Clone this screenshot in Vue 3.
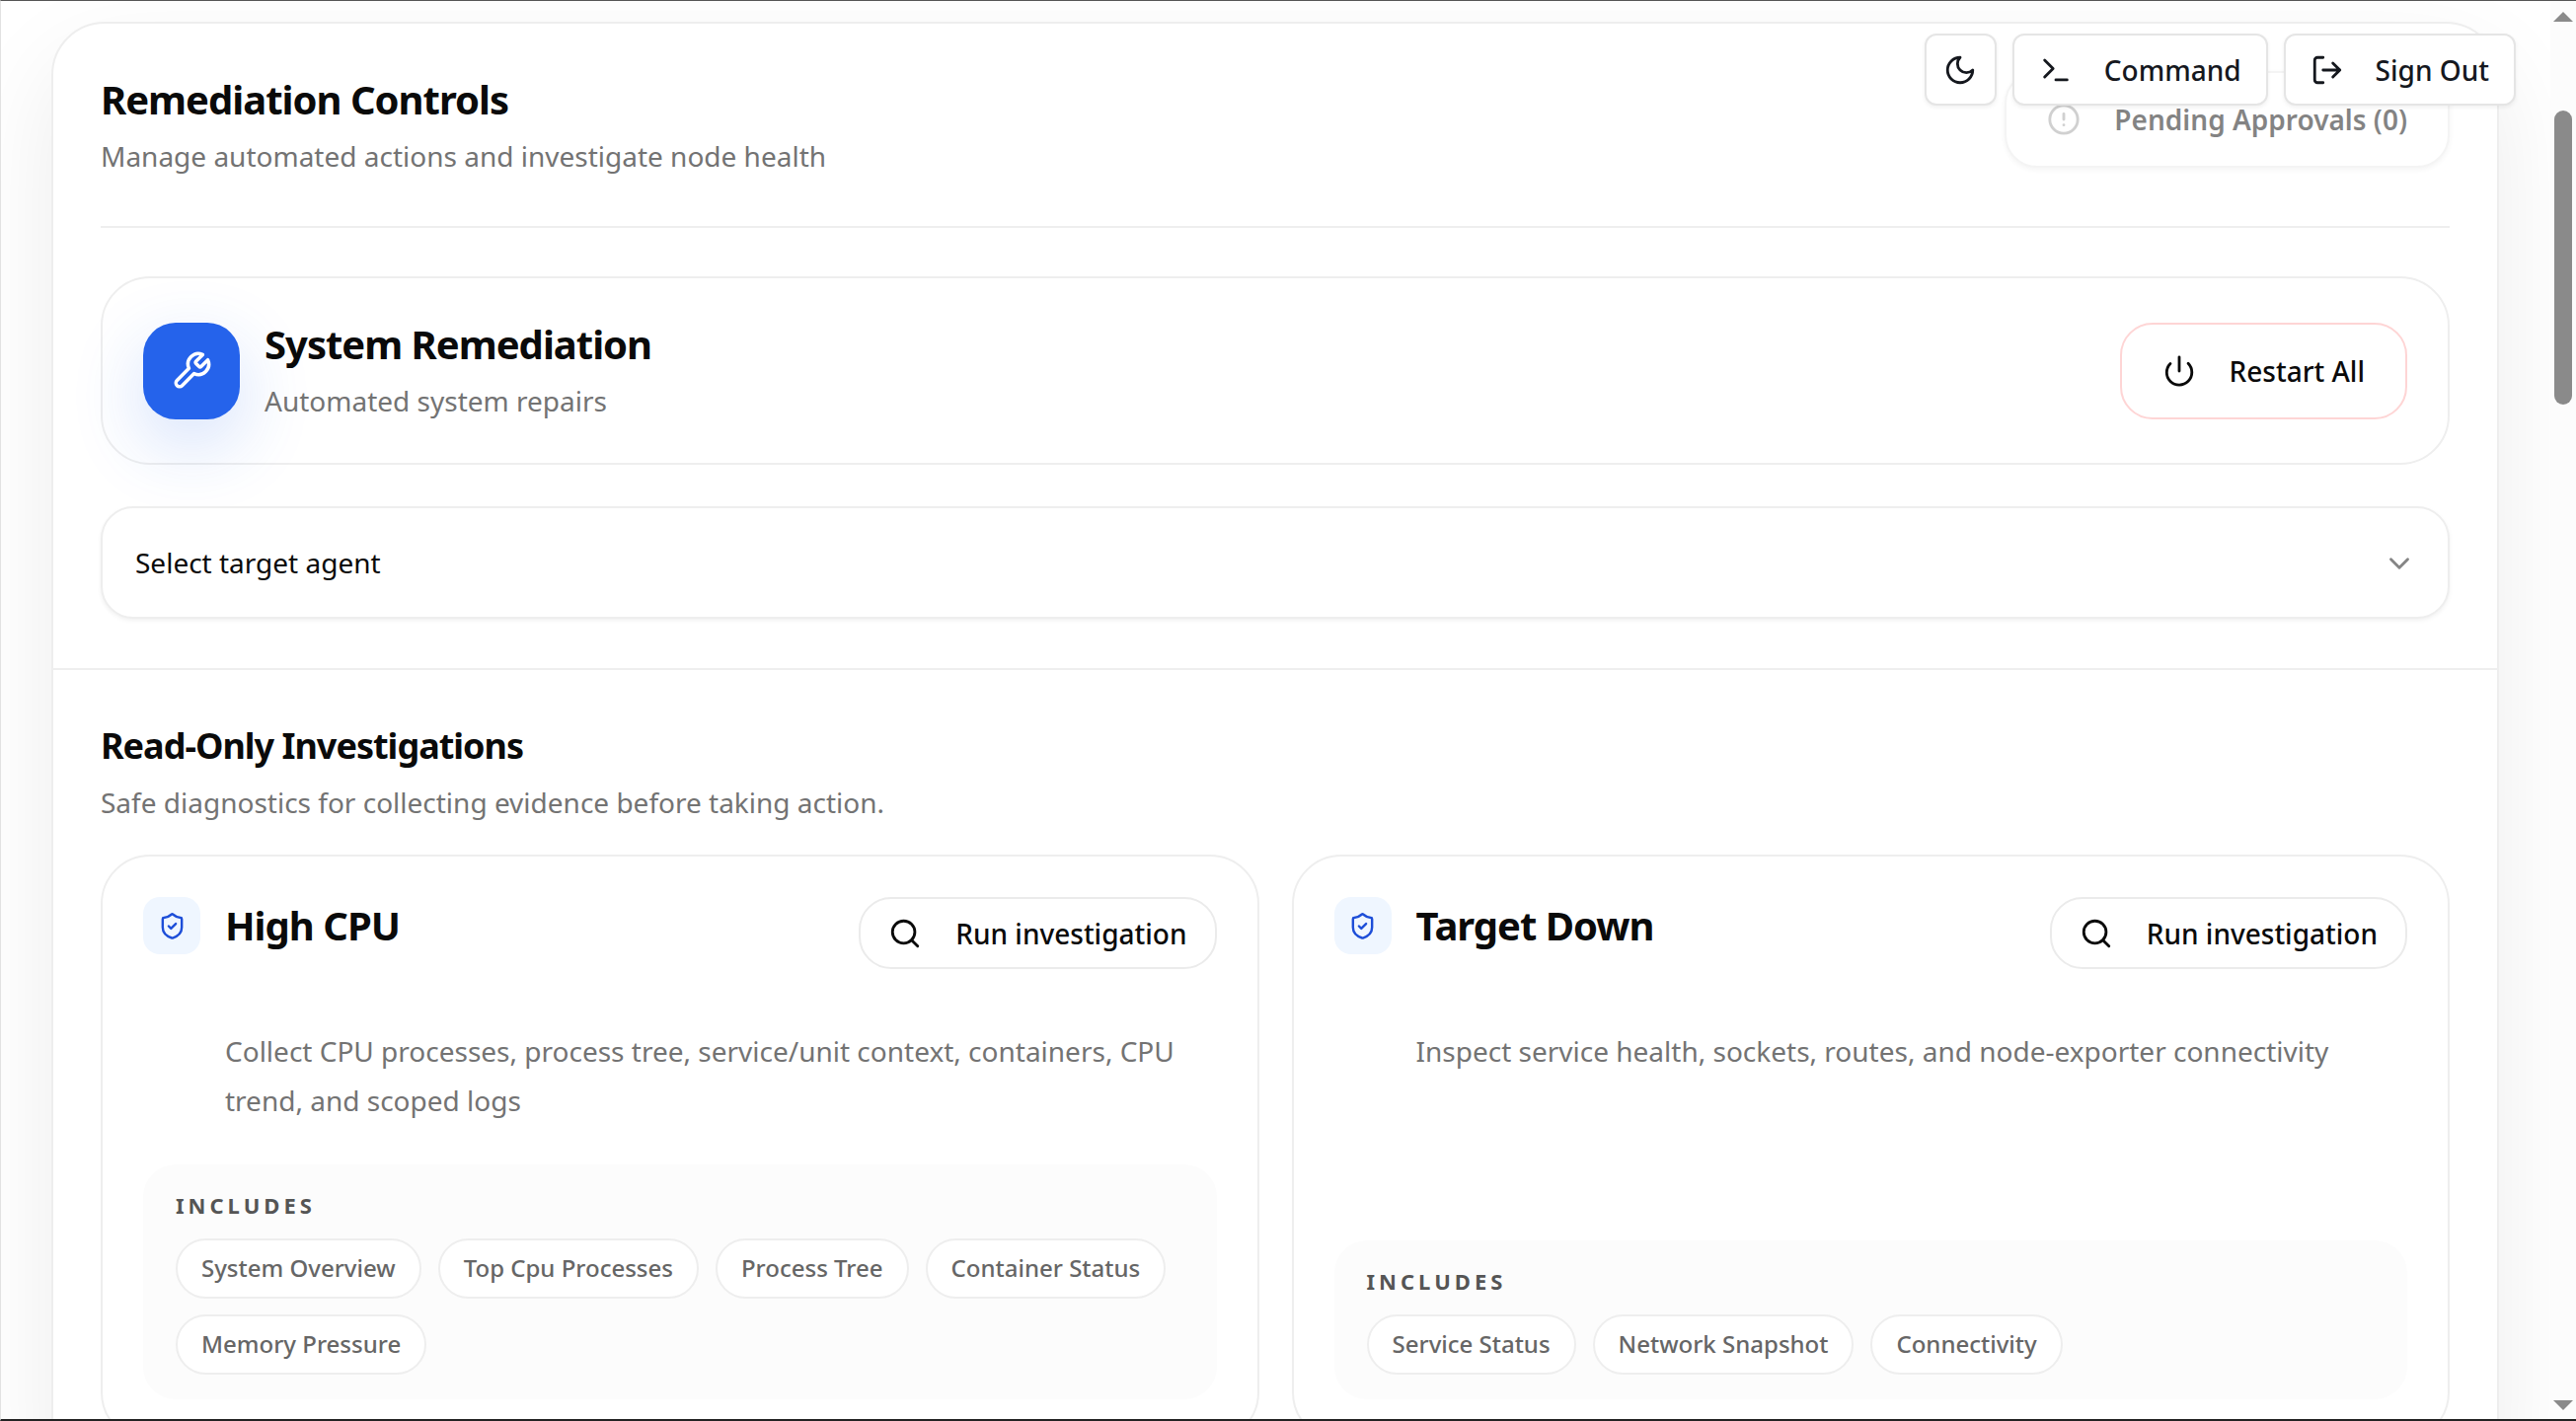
<script setup>
const investigations = [
  {
    title: 'High CPU',
    description: 'Collect CPU processes, process tree, service/unit context, containers, CPU trend, and scoped logs',
    includes: ['System Overview', 'Top Cpu Processes', 'Process Tree', 'Container Status', 'Memory Pressure'],
  },
  {
    title: 'Target Down',
    description: 'Inspect service health, sockets, routes, and node-exporter connectivity',
    includes: ['Service Status', 'Network Snapshot', 'Connectivity'],
  },
]
</script>

<template>
  <div class="viewport">
    <main class="panel">
      <section class="controls">
        <header class="controls-head">
          <div>
            <h1 class="title">Remediation Controls</h1>
            <p class="muted subtitle">Manage automated actions and investigate node health</p>
          </div>
          <button class="btn btn-large pending" type="button" disabled>
            <svg class="icon" viewBox="0 0 24 24"><circle cx="12" cy="12" r="10" /><path d="M12 8v4M12 16h.01" /></svg>
            <span>Pending Approvals (0)</span>
          </button>
        </header>

        <div class="system">
          <div class="system-badge">
            <svg class="icon icon-wrench" viewBox="0 0 24 24"><path d="M14.7 6.3a1 1 0 0 0 0 1.4l1.6 1.6a1 1 0 0 0 1.4 0l3.77-3.77a6 6 0 0 1-7.94 7.94l-6.91 6.91a2.12 2.12 0 0 1-3-3l6.91-6.91a6 6 0 0 1 7.94-7.94l-3.76 3.76z" /></svg>
          </div>
          <div class="system-text">
            <h2 class="title">System Remediation</h2>
            <p class="muted subtitle">Automated system repairs</p>
          </div>
          <button class="btn btn-large danger" type="button">
            <svg class="icon" viewBox="0 0 24 24"><path d="M12 2v10M18.4 6.6a9 9 0 1 1-12.77.04" /></svg>
            <span>Restart All</span>
          </button>
        </div>

        <div class="select-wrap">
          <select class="select" aria-label="Target agent">
            <option>Select target agent</option>
          </select>
          <svg class="icon chevron" viewBox="0 0 24 24"><path d="m6 9 6 6 6-6" /></svg>
        </div>
      </section>

      <section class="investigations">
        <h2 class="title section-title">Read-Only Investigations</h2>
        <p class="muted subtitle">Safe diagnostics for collecting evidence before taking action.</p>
        <div class="grid">
          <article v-for="item in investigations" :key="item.title" class="card">
            <div class="card-head">
              <div class="card-badge">
                <svg class="icon icon-shield" viewBox="0 0 24 24"><path d="M20 13c0 5-3.5 7.5-7.66 8.95a1 1 0 0 1-.67-.01C7.5 20.5 4 18 4 13V6a1 1 0 0 1 1-1c2 0 4.5-1.2 6.24-2.72a1.17 1.17 0 0 1 1.52 0C14.51 3.81 17 5 19 5a1 1 0 0 1 1 1z" /><path d="m9 12 2 2 4-4" /></svg>
              </div>
              <h3 class="title card-title">{{ item.title }}</h3>
              <button class="btn run" type="button">
                <svg class="icon" viewBox="0 0 24 24"><circle cx="11" cy="11" r="8" /><path d="m21 21-4.3-4.3" /></svg>
                <span>Run investigation</span>
              </button>
            </div>
            <p class="muted description">{{ item.description }}</p>
            <div class="includes">
              <h4 class="includes-title">INCLUDES</h4>
              <ul class="chips">
                <li v-for="chip in item.includes" :key="chip" class="chip">{{ chip }}</li>
              </ul>
            </div>
          </article>
        </div>
      </section>
    </main>

    <nav class="toolbar">
      <button class="btn tool tool-square" type="button" aria-label="Toggle theme">
        <svg class="icon" viewBox="0 0 24 24"><path d="M12 3a6 6 0 0 0 9 9 9 9 0 1 1-9-9Z" /></svg>
      </button>
      <button class="btn tool" type="button">
        <svg class="icon" viewBox="0 0 24 24"><path d="m4 17 6-6-6-6M12 19h8" /></svg>
        <span>Command</span>
      </button>
      <button class="btn tool" type="button">
        <svg class="icon" viewBox="0 0 24 24"><path d="M9 21H5a2 2 0 0 1-2-2V5a2 2 0 0 1 2-2h4M16 17l5-5-5-5M21 12H9" /></svg>
        <span>Sign Out</span>
      </button>
    </nav>

    <div class="scrollbar" aria-hidden="true">
      <svg class="arrow" viewBox="0 0 20 10"><path d="M10 0 20 10H0z" /></svg>
      <div class="thumb"></div>
      <svg class="arrow" viewBox="0 0 20 10"><path d="M0 0h20L10 10z" /></svg>
    </div>
  </div>
</template>

<style>
body {
  margin: 0;
  background: #fff;
}
</style>

<style scoped>
* {
  box-sizing: border-box;
}

.viewport {
  position: relative;
  height: 100vh;
  overflow: hidden;
  padding: 21px 78px 0 51px;
  border: solid #e2e2e2;
  border-width: 1px 0 2px 1px;
  border-top-color: #555;
  border-bottom-color: #222;
  background: #fff;
  color: #0a0a0a;
  font-family: "Noto Sans", "Open Sans", sans-serif;
  font-size: 28px;
  line-height: 50px;
}

h1, h2, h3, h4, p, ul {
  margin: 0;
  padding: 0;
}

.panel {
  border: 2px solid #eee;
  border-radius: 54px;
  background: #fff;
  box-shadow: 0 40px 100px rgba(0, 0, 0, 0.08);
}

.controls {
  padding: 48px 48px 50px;
  border-bottom: 2px solid #eee;
}

.controls-head {
  display: flex;
  align-items: flex-start;
  justify-content: space-between;
  padding-bottom: 46px;
  border-bottom: 2px solid #eee;
}

.title {
  font-size: 40px;
  font-weight: 700;
  line-height: 58px;
  letter-spacing: -1px;
}

.muted {
  color: #737373;
}

.subtitle {
  margin-top: 3px;
}

.btn {
  display: flex;
  align-items: center;
  gap: 34px;
  height: 73px;
  padding: 0 28px;
  border: 2px solid #ebebeb;
  border-radius: 33px;
  background: #fff;
  color: #0a0a0a;
  font: inherit;
  font-weight: 500;
  white-space: nowrap;
}

.btn-large {
  height: 98px;
  padding: 0 41px;
}

.icon {
  flex: none;
  width: 34px;
  height: 34px;
  fill: none;
  stroke: currentColor;
  stroke-width: 2;
  stroke-linecap: round;
  stroke-linejoin: round;
}

.pending {
  opacity: 0.5;
  font-weight: 600;
  box-shadow: 0 2px 4px rgba(0, 0, 0, 0.08);
}

.pending .icon {
  color: #a3a3a3;
}

.system {
  display: flex;
  align-items: center;
  gap: 25px;
  margin-top: 49px;
  padding: 38px 41px;
  border: 2px solid #eee;
  border-radius: 50px;
}

.system-badge {
  display: grid;
  place-items: center;
  width: 98px;
  height: 98px;
  border-radius: 33px;
  background: #2563eb;
  color: #fff;
  box-shadow: 0 25px 75px rgba(37, 99, 235, 0.2);
}

.icon-wrench {
  width: 42px;
  height: 42px;
}

.system-text {
  flex: 1;
}

.danger {
  border-color: #fed5d5;
}

.select-wrap {
  position: relative;
  margin-top: 42px;
}

.select {
  display: block;
  width: 100%;
  height: 114px;
  padding: 0 33px;
  border: 2px solid #eee;
  border-radius: 33px;
  appearance: none;
  background: #fff;
  color: #0a0a0a;
  font: inherit;
  box-shadow: 0 2px 4px rgba(0, 0, 0, 0.06);
}

.chevron {
  position: absolute;
  top: 41px;
  right: 34px;
  color: #858585;
}

.investigations {
  padding: 48px;
}

.section-title {
  font-size: 36px;
}

.grid {
  display: grid;
  grid-template-columns: 1fr 1fr;
  gap: 33px;
  margin-top: 28px;
}

.card {
  display: flex;
  flex-direction: column;
  padding: 41px;
  border: 2px solid #eee;
  border-radius: 50px;
}

.card-head {
  display: flex;
  align-items: flex-start;
  gap: 25px;
}

.card-badge {
  display: grid;
  place-items: center;
  width: 58px;
  height: 58px;
  border-radius: 17px;
  background: #eff6ff;
  color: #1d4ed8;
}

.icon-shield {
  width: 29px;
  height: 29px;
}

.card-title {
  flex: 1;
}

.description {
  margin: 58px 41px 40px 83px;
}

.includes {
  margin-top: auto;
  padding: 25px 33px;
  border-radius: 33px;
  background: #fcfcfc;
}

.includes-title {
  color: #555;
  font-size: 22px;
  font-weight: 700;
  line-height: 33px;
  letter-spacing: 4px;
}

.chips {
  display: flex;
  flex-wrap: wrap;
  gap: 16px 17px;
  margin-top: 17px;
  list-style: none;
}

.chip {
  height: 61px;
  padding: 0 24px;
  border: 2px solid #eee;
  border-radius: 31px;
  background: #fff;
  color: #666;
  font-size: 24px;
  font-weight: 500;
  line-height: 56px;
}

.toolbar {
  position: absolute;
  top: 33px;
  right: 61px;
  display: flex;
  gap: 16px;
}

.tool {
  gap: 32px;
  padding: 0 25px;
  border-color: #e5e5e5;
  border-radius: 12px;
  color: #15181e;
  box-shadow: 0 2px 4px rgba(0, 0, 0, 0.06);
}

.tool-square {
  justify-content: center;
  width: 73px;
  padding: 0;
}

.scrollbar {
  position: absolute;
  top: 0;
  right: 0;
  bottom: 0;
  display: flex;
  flex-direction: column;
  align-items: center;
  width: 26px;
  padding: 11px 0 9px;
  background: #fcfcfc;
}

.arrow {
  width: 20px;
  height: 10px;
  fill: #8a8a8a;
}

.thumb {
  width: 18px;
  height: 298px;
  margin-top: 90px;
  margin-bottom: auto;
  border-radius: 9px;
  background: #8a8a8a;
}
</style>
